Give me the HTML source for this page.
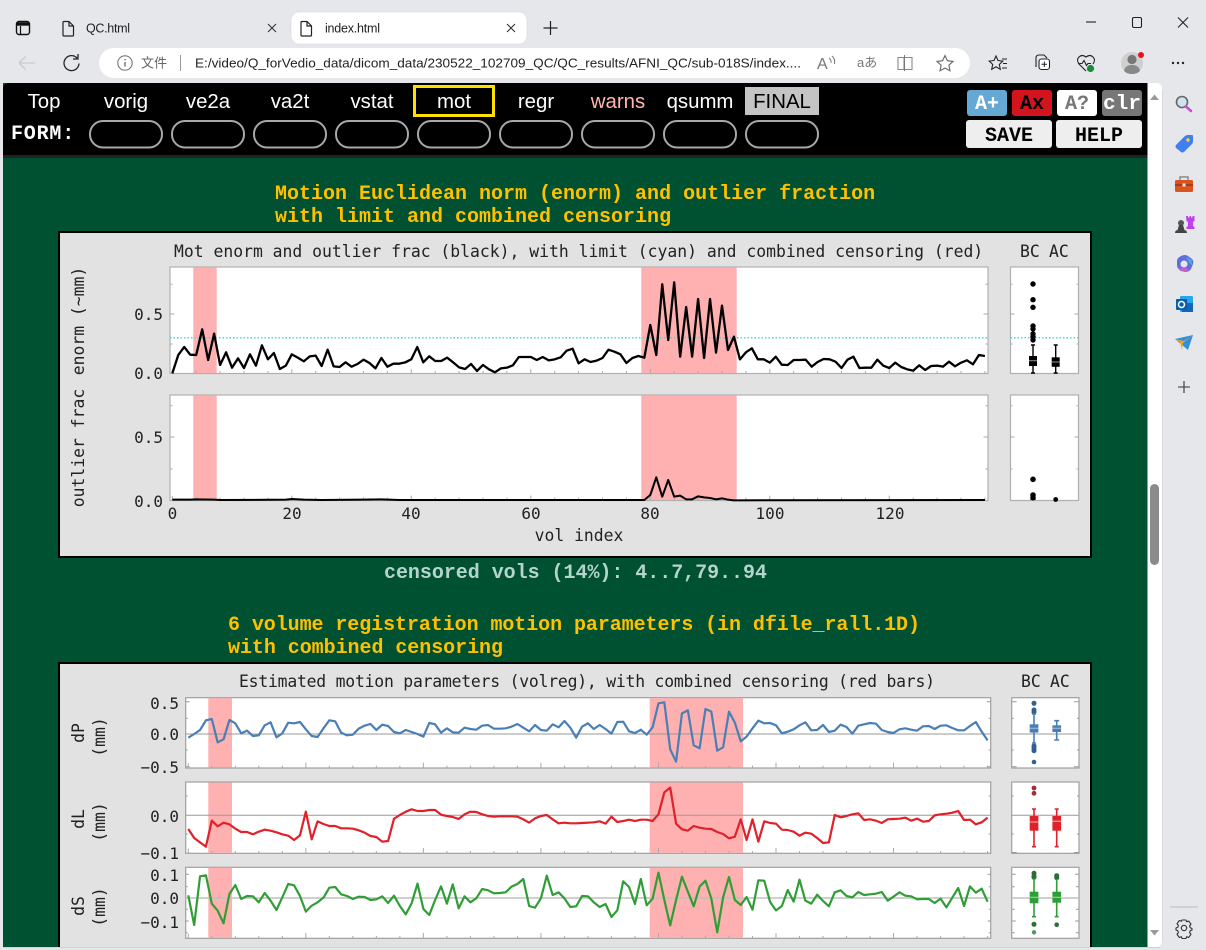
<!DOCTYPE html>
<html lang="en"><head><meta charset="utf-8"><title>index.html</title>
<style>
html,body{margin:0;padding:0;width:1206px;height:950px;overflow:hidden;background:#e6e7eb}
svg{display:block;position:absolute;left:0;top:0}
.ui{font-family:"Liberation Sans","Noto Sans CJK SC",sans-serif}
.nav{font-family:"Liberation Sans",sans-serif;font-size:20.4px;fill:#fff;text-anchor:middle}
.mb{font-family:"Liberation Mono",monospace;font-weight:bold;font-size:20px}
.pl{font-family:"DejaVu Sans Mono",monospace;font-size:16.4px;fill:#222}
.p2{font-size:16px}
.line{fill:none;stroke-linejoin:round;vector-effect:non-scaling-stroke}
.tk{fill:none;stroke:#aaa;stroke-width:1;vector-effect:non-scaling-stroke}
.ax{fill:#fff;stroke:#b0b0b0;stroke-width:1.200}
.ic{fill:none;stroke:#333;stroke-width:1.200}
</style></head><body>
<svg width="1206" height="950" viewBox="0 0 1206 950" xmlns="http://www.w3.org/2000/svg">
<rect width="1206" height="950" fill="#e6e7eb"/>

<!-- tabs -->
<g class="ic" stroke-linejoin="round">
<rect x="16.500" y="21.500" width="13" height="13" rx="2.500" stroke="#111" stroke-width="1.400"/>
<path d="M16.500 24h13" stroke="#111" stroke-width="3.400"/><path d="M20.500 26v8" stroke="#111"/>
<path d="M63 22.500a1 1 0 0 1 1-1h5l4.500 4.500v9a1 1 0 0 1-1 1H64a1 1 0 0 1-1-1zM69 21.500v4.500h4.500" stroke="#222"/>
</g>
<text class="ui" x="86" y="32.500" font-size="12.500" fill="#222" textLength="44">QC.html</text>
<path d="M268 24l8 8M276 24l-8 8" stroke="#333" stroke-width="1.100"/>
<rect x="291" y="12" width="236" height="32" rx="8" fill="#fff" stroke="#d8d8dc" stroke-width=".6"/>
<path d="M301 22.500a1 1 0 0 1 1-1h5l4.500 4.500v9a1 1 0 0 1-1 1H302a1 1 0 0 1-1-1zM307 21.500v4.500h4.500" fill="none" stroke="#222" stroke-width="1.200"/>
<text class="ui" x="325" y="32.500" font-size="12.500" fill="#222" textLength="55">index.html</text>
<path d="M507 24l8 8M515 24l-8 8" stroke="#333" stroke-width="1.100"/>
<path d="M550.500 21v14M543.500 28h14" stroke="#222" stroke-width="1.200"/>
<path d="M1086 22h10" stroke="#222" stroke-width="1.100"/>
<rect x="1132.500" y="17.500" width="9" height="10" rx="1.500" fill="none" stroke="#222" stroke-width="1.100"/>
<path d="M1178 17.500l10 10M1188 17.500l-10 10" stroke="#222" stroke-width="1.100"/>

<!-- toolbar -->
<path d="M19 63h16M19 63l6.500-6.500M19 63l6.500 6.500" fill="none" stroke="#c9cbcf" stroke-width="1.300"/>
<path d="M77 58a7.500 7.500 0 1 0 2 5.500M78 54v5h-5" fill="none" stroke="#222" stroke-width="1.300"/>
<rect x="99" y="48" width="871" height="30" rx="15" fill="#fff"/>
<circle cx="125" cy="63" r="7.200" fill="none" stroke="#777" stroke-width="1.100"/>
<path d="M125 62v4.500M125 59v1.400" stroke="#666" stroke-width="1.300"/>
<text class="ui" x="141" y="67.500" font-size="13" fill="#666">文件</text>
<path d="M180.500 55v16" stroke="#999"/>
<text class="ui" x="195" y="67.500" font-size="13" fill="#222" textLength="606" lengthAdjust="spacingAndGlyphs">E:/video/Q_forVedio_data/dicom_data/230522_102709_QC/QC_results/AFNI_QC/sub-018S/index....</text>
<text class="ui" x="817" y="69" font-size="16" fill="#777">A</text>
<path d="M829 58q2.500 2 2 5M832 56q3.500 3 2.500 8" fill="none" stroke="#777"/>
<text class="ui" x="857" y="67" font-size="13" fill="#777">aあ</text>
<path d="M898 57.500h6v12h-6zM904 57.500h8v12h-8" fill="none" stroke="#888" stroke-width="1.100"/><path d="M904.500 55v16" stroke="#777"/>
<path d="M945 55.500l2.400 5.200 5.600.7-4.100 3.800 1.100 5.600-5-2.800-5 2.800 1.100-5.600-4.100-3.800 5.600-.7z" fill="none" stroke="#666" stroke-width="1.100"/>
<path d="M996 56l2 4.500 4.800.6-3.500 3.300 1 4.900-4.300-2.500-4.300 2.500 1-4.900-3.500-3.300 4.800-.6zM1002 59h5M1003 63.500h4M1002 68h5" fill="none" stroke="#222" stroke-width="1.100"/>
<path d="M1036 67v-9q0-3 3-3h5l3 3" fill="none" stroke="#222" stroke-width="1.100"/>
<rect x="1039" y="59" width="10.500" height="10.500" rx="2.500" fill="#fff" stroke="#222" stroke-width="1.100"/>
<path d="M1044.300 61.500v5.500M1041.500 64.200h5.500" stroke="#222"/>
<path d="M1086 71l-7-7q-3-4 0-7t7 0q4-3 7 0t0 7M1079 63.500h3l2-3 2.500 5 1.500-2h3" fill="none" stroke="#222" stroke-width="1.100"/>
<circle cx="1090.500" cy="68.500" r="3.600" fill="#1a8a3c"/>
<circle cx="1132" cy="63" r="11" fill="#cfcfcf"/>
<circle cx="1132" cy="59.500" r="4.600" fill="#777"/>
<path d="M1124 71q1-6 8-6t8 6q-3 3-8 3t-8-3z" fill="#888"/>
<circle cx="1141" cy="55" r="3" fill="#e81123"/>
<circle cx="1173" cy="63" r="1.200" fill="#222"/><circle cx="1178" cy="63" r="1.200" fill="#222"/><circle cx="1183" cy="63" r="1.200" fill="#222"/>

<!-- sidebar -->
<circle cx="1182" cy="102" r="5.500" fill="#cfe3f0" stroke="#666" stroke-width="1.600"/>
<path d="M1186 106.500l5 4.500" stroke="#c54fd8" stroke-width="2.600" stroke-linecap="round"/>
<path d="M1176 145l9-9q1-1 3-1h4q1 0 1 1v5q0 2-1 3l-8 8q-2 1-3 0l-5-4q-1-1 0-3z" fill="#3f7ff0"/>
<circle cx="1188" cy="140" r="1.700" fill="#ffd23a"/>
<rect x="1175" y="180" width="18" height="12" rx="1.500" fill="#d9541e"/>
<path d="M1180 180v-3h8v3" fill="none" stroke="#888" stroke-width="1.500"/>
<path d="M1175 185h18" stroke="#8f3210" stroke-width="1.200"/><rect x="1182.500" y="183.500" width="3" height="3" fill="#eee"/>
<circle cx="1181" cy="223" r="3" fill="#555"/><path d="M1179 225h4l1.500 5h-7zM1175 233q0-3 3-3h6q3 0 3 3z" fill="#444"/>
<path d="M1186 216h2v1.500h1.500V216h1.500v1.500h1.500V216h2v5l-1.500 1v4l1.500 1v2h-8v-2l1.500-1v-4l-1.500-1z" fill="#c040f0"/>
<path d="M1181 256q4-2 7 0l4 3q2 2 1 5l-2 5q-2 3-6 3l-4-1q-4-2-4-6v-4q0-3 4-5z" fill="#5e70d8"/>
<circle cx="1184" cy="264" r="3.500" fill="#e6e7eb"/><path d="M1186 257l6 3v5l-3-2z" fill="#48a8e0"/><path d="M1178 268q4 5 11 3l-2-3z" fill="#c060d0"/>
<rect x="1180" y="296" width="13" height="16" rx="1" fill="#28a8ea"/><path d="M1182 303h11v9h-11z" fill="#1066b8"/>
<rect x="1176" y="299" width="11" height="11" rx="1" fill="#0a5cb0"/><circle cx="1181.500" cy="304.500" r="3" fill="none" stroke="#fff" stroke-width="1.500"/>
<path d="M1175 339l18-4-5 15z" fill="#2d8fe0"/><path d="M1175 339l9 2 9-6-10 8-1 7-2-8z" fill="#f2a51f"/>
<path d="M1184 381v12M1178 387h12" stroke="#333" stroke-width="1.100"/>
<path d="M1170 907h28" stroke="#b8b8bc"/>
<circle cx="1184" cy="928" r="2.700" fill="none" stroke="#333" stroke-width="1.100"/>
<path d="M1182 920h4l.6 1.800 2-.8 2.400 3.200-1.400 1.500.6 2 1.800.8v1.500l-1.800.8-.6 2 1.400 1.500-2.400 3.200-2-.8-.6 1.800h-4l-.6-1.800-2 .8-2.400-3.200 1.400-1.500-.6-2-1.800-.8V928l1.800-.8.6-2-1.400-1.500 2.400-3.200 2 .8z" fill="none" stroke="#333" stroke-width="1.100" stroke-linejoin="round"/>

<!-- page -->
<path d="M3 89q0-6 6-6h1147q6 0 6 6v852q0 6-6 6H3z" fill="#fff"/>
<rect x="3" y="83" width="1144.500" height="864" fill="#005032"/>
<path d="M3 155V89q0-6 6-6h1138.500v72z" fill="#000"/>
<rect x="3" y="155" width="1144.500" height="3" fill="#222"/>
<path d="M1150 100l4.500-5.500 4.500 5.500z" fill="#999"/>
<path d="M1150 930l4.500 5.500 4.500-5.500z" fill="#999"/>
<rect x="1150" y="484" width="9" height="81" rx="4.500" fill="#8b8b8b"/>

<!-- nav -->
<text class="nav" x="44" y="108">Top</text>
<text class="nav" x="126" y="108">vorig</text>
<text class="nav" x="208" y="108">ve2a</text>
<text class="nav" x="290" y="108">va2t</text>
<text class="nav" x="372" y="108">vstat</text>
<rect x="414.500" y="86.500" width="79" height="29" fill="none" stroke="#ffe000" stroke-width="3"/>
<text class="nav" x="454" y="108">mot</text>
<text class="nav" x="536" y="108">regr</text>
<text class="nav" x="618" y="108" style="fill:#ffb6b0">warns</text>
<text class="nav" x="700" y="108">qsumm</text>
<rect x="745" y="87" width="74" height="28" fill="#c4c4c4"/>
<text class="nav" x="782" y="108" style="fill:#000">FINAL</text>
<text class="mb" x="11" y="139" fill="#fff" letter-spacing=".8">FORM:</text>
<g fill="none" stroke="#a8a8a8" stroke-width="2">
<rect x="90" y="121" width="72" height="26.500" rx="13"/><rect x="172" y="121" width="72" height="26.500" rx="13"/><rect x="254" y="121" width="72" height="26.500" rx="13"/><rect x="336" y="121" width="72" height="26.500" rx="13"/><rect x="418" y="121" width="72" height="26.500" rx="13"/><rect x="500" y="121" width="72" height="26.500" rx="13"/><rect x="582" y="121" width="72" height="26.500" rx="13"/><rect x="664" y="121" width="72" height="26.500" rx="13"/><rect x="746" y="121" width="72" height="26.500" rx="13"/>
</g>
<rect x="967" y="90" width="40" height="26" rx="3" fill="#65a8d3"/>
<rect x="1012" y="90" width="40" height="26" rx="3" fill="#d4141c"/>
<rect x="1057" y="90" width="40" height="26" rx="3" fill="#fff"/>
<rect x="1102" y="90" width="40" height="26" rx="3" fill="#777"/>
<text class="mb" x="987" y="109" text-anchor="middle" fill="#fff">A+</text>
<text class="mb" x="1032" y="109" text-anchor="middle" fill="#000">Ax</text>
<text class="mb" x="1077" y="109" text-anchor="middle" fill="#777">A?</text>
<text class="mb" x="1103" y="109" fill="#fff" textLength="38" lengthAdjust="spacingAndGlyphs">clr</text>
<rect x="966" y="120" width="86" height="28" rx="3" fill="#eee"/>
<rect x="1056" y="120" width="86" height="28" rx="3" fill="#eee"/>
<text class="mb" x="1009" y="141" text-anchor="middle" fill="#000">SAVE</text>
<text class="mb" x="1099" y="141" text-anchor="middle" fill="#000">HELP</text>

<!-- headings -->
<text class="mb" x="275" y="199" fill="#ffc000">Motion Euclidean norm (enorm) and outlier fraction</text>
<text class="mb" x="275" y="222" fill="#ffc000">with limit and combined censoring</text>
<text class="mb" x="384" y="578" fill="#b4d4cc" textLength="383">censored vols (14%): 4..7,79..94</text>
<text class="mb" x="228" y="630" fill="#ffc000" textLength="692">6 volume registration motion parameters (in dfile_rall.1D)</text>
<text class="mb" x="228" y="653" fill="#ffc000" textLength="275">with combined censoring</text>

<!-- figure 1 -->
<rect x="59" y="232" width="1032" height="325" fill="#e2e2e2" stroke="#000" stroke-width="2"/>
<text class="pl" x="174" y="257">Mot enorm and outlier frac (black), with limit (cyan) and combined censoring (red)</text>
<text class="pl" x="1020" y="257">BC</text><text class="pl" x="1049" y="257">AC</text>
<text class="pl" transform="translate(84,321) rotate(-90)" text-anchor="middle">enorm (~mm)</text>
<text class="pl" transform="translate(84,448) rotate(-90)" text-anchor="middle">outlier frac</text>
<g class="pl p2" text-anchor="end">
<text x="163" y="320">0.5</text><text x="163" y="379">0.0</text><text x="163" y="443">0.5</text><text x="163" y="507">0.0</text>
</g>
<g class="pl p2" text-anchor="middle">
<text x="172.500" y="519">0</text><text x="292" y="519">20</text><text x="411" y="519">40</text><text x="531" y="519">60</text><text x="650" y="519">80</text><text x="770" y="519">100</text><text x="890" y="519">120</text>
</g>
<text class="pl" x="579" y="541" text-anchor="middle">vol index</text>
<rect class="ax" x="170" y="267" width="818" height="106.500"/>
<rect class="ax" x="170" y="395" width="818" height="105.500"/>
<rect class="ax" x="1010.500" y="267" width="68" height="106.500"/>
<rect class="ax" x="1010.500" y="395" width="68" height="105.500"/>
<g fill="#ffb0b0">
<rect x="193.300" y="267.600" width="23.400" height="105.400"/><rect x="641.300" y="267.600" width="95.400" height="105.400"/>
<rect x="193.300" y="395.600" width="23.400" height="104.400"/><rect x="641.300" y="395.600" width="95.400" height="104.400"/>
</g>
<path d="M170 337.700H988M1010.500 337.700H1078.500" stroke="#30e4e4" stroke-width="1.500" stroke-dasharray="1.500 2"/>
<path d="M170.500 284.300h2M170.500 314h4M170.500 344h2M985.500 284.300h2.500M983.500 314h4.500M985.500 344h2.500M170.500 405.700h2M170.500 437h4M170.500 469h2M985.500 405.700h2.500M983.500 437h4.500M985.500 469h2.500M1010.500 284.300h2M1010.500 314h4M1010.500 344h2M1076.500 284.300h2M1074.500 314h4M1076.500 344h2M1010.500 405.700h2M1010.500 437h4M1010.500 469h2M1076.500 405.700h2M1074.500 437h4M1076.500 469h2" stroke="#aaa" fill="none"/>
<g transform="matrix(5.975 0 0 .33333 172.300 230)">
<path class="tk" d="M0 430v-12M4 430v-7M8 430v-7M12 430v-7M16 430v-7M20 430v-13M24 430v-7M28 430v-7M32 430v-7M36 430v-7M40 430v-13M44 430v-7M48 430v-7M52 430v-7M56 430v-7M60 430v-13M64 430v-7M68 430v-7M72 430v-7M76 430v-7M80 430v-13M84 430v-7M88 430v-7M92 430v-7M96 430v-7M100 430v-13M104 430v-7M108 430v-7M112 430v-7M116 430v-7M120 430v-13M124 430v-7M128 430v-7M132 430v-7M136 430v-7M0 810v-12M4 810v-7M8 810v-7M12 810v-7M16 810v-7M20 810v-13M24 810v-7M28 810v-7M32 810v-7M36 810v-7M40 810v-13M44 810v-7M48 810v-7M52 810v-7M56 810v-7M60 810v-13M64 810v-7M68 810v-7M72 810v-7M76 810v-7M80 810v-13M84 810v-7M88 810v-7M92 810v-7M96 810v-7M100 810v-13M104 810v-7M108 810v-7M112 810v-7M116 810v-7M120 810v-13M124 810v-7M128 810v-7M132 810v-7M136 810v-7"/>
<polyline class="line" stroke="#000" stroke-width="2.300" points="0,430 1,375 2,351 3,374 4,375 5,298 6,390 7,311 8,405 9,367 10,413 11,385 12,414 13,373 14,407 15,346 16,388 17,369 18,417 19,407 20,373 21,383 22,394 23,379 24,377 25,408 26,359 27,409 28,411 29,397 30,410 31,402 32,389 33,399 34,415 35,384 36,410 37,401 38,401 39,397 40,388 41,351 42,397 43,379 44,393 45,393 46,383 47,397 48,412 49,417 50,402 51,423 52,405 53,418 54,427 55,415 56,413 57,406 58,381 59,381 60,381 61,390 62,381 63,391 64,388 65,382 66,362 67,356 68,400 69,388 70,396 71,392 72,384 73,359 74,365 75,373 76,399 77,384 78,378 79,383 80,285 81,375 82,163 83,330 84,157 85,380 86,231 87,380 88,207 89,384 90,207 91,368 92,227 93,360 94,320 95,388 96,367 97,355 98,388 99,388 100,398 101,380 102,404 103,405 104,390 105,390 106,389 107,410 108,396 109,387 110,388 111,395 112,414 113,389 114,380 115,414 116,413 117,413 118,389 119,407 120,414 121,398 122,411 123,418 124,422 125,406 126,420 127,408 128,407 129,410 130,395 131,409 132,398 133,391 134,403 135,375 136,378"/>
<polyline class="line" stroke="#000" stroke-width="2" points="0,809 3,809 4,808 7,809 8,810 19,809 20,807 22,809 25,810 32,809 35,808 38,810 79,810 80,795 81,742 82,800 83,750 84,800 85,797 86,808 87,808 88,799 89,802 90,804 91,808 92,805 93,809 94,811 136,810"/>
</g>
<!-- fig 1 boxplots -->
<g fill="#000">
<circle cx="1033" cy="284" r="2.700"/><circle cx="1033" cy="299.700" r="2.700"/><circle cx="1033" cy="307.300" r="2.700"/><circle cx="1033" cy="326" r="2.700"/><circle cx="1033" cy="329" r="2.700"/><circle cx="1033" cy="334" r="2.700"/><circle cx="1033" cy="336.700" r="2.700"/><circle cx="1033" cy="340" r="2.700"/>
<rect x="1029" y="356" width="8" height="10"/><rect x="1051.700" y="357.300" width="8" height="9.500"/>
<circle cx="1033" cy="479.300" r="2.800"/><circle cx="1033" cy="495" r="2.800"/><circle cx="1033" cy="497.700" r="2.800"/><circle cx="1055.700" cy="499.500" r="2.400"/>
<rect x="1030.500" y="497" width="5" height="3"/>
</g>
<path d="M1033 345v28M1031 345h4M1031 373h4M1055.700 345v28M1053.700 345h4M1053.700 373h4" stroke="#000" stroke-width="1.400" fill="none"/>
<path d="M1029 360.700h8M1051.700 362h8" stroke="#999" stroke-width="1"/>

<!-- figure 2 -->
<path d="M59 947V663H1091V947" fill="#e2e2e2" stroke="#000" stroke-width="2"/>
<text class="pl" x="239" y="687" textLength="696">Estimated motion parameters (volreg), with combined censoring (red bars)</text>
<text class="pl" x="1021" y="687">BC</text><text class="pl" x="1050" y="687">AC</text>
<g class="pl" text-anchor="middle">
<text transform="translate(84,733) rotate(-90)">dP</text><text transform="translate(105,737) rotate(-90)">(mm)</text>
<text transform="translate(84,819) rotate(-90)">dL</text><text transform="translate(105,822) rotate(-90)">(mm)</text>
<text transform="translate(84,906) rotate(-90)">dS</text><text transform="translate(105,907) rotate(-90)">(mm)</text>
</g>
<g class="pl p2" text-anchor="end">
<text x="179" y="709">0.5</text><text x="179" y="740">0.0</text><text x="179" y="773">−0.5</text>
<text x="179" y="822">0.0</text><text x="179" y="859">−0.1</text>
<text x="179" y="881">0.1</text><text x="179" y="904">0.0</text><text x="179" y="928">−0.1</text>
</g>
<g class="ax" style="stroke:#a0a0a0">
<rect x="185.700" y="697.700" width="805" height="70.300"/><rect x="185.700" y="782" width="805" height="71.300"/><rect x="185.700" y="867.300" width="805" height="71"/>
<rect x="1011.700" y="697.700" width="67.300" height="70.300"/><rect x="1011.700" y="782" width="67.300" height="71.300"/><rect x="1011.700" y="867.300" width="67.300" height="71"/>
</g>
<g fill="#ffb0b0">
<rect x="208.300" y="698.200" width="23.700" height="69.300"/><rect x="649.700" y="698.200" width="93.300" height="69.300"/>
<rect x="208.300" y="782.500" width="23.700" height="70.300"/><rect x="649.700" y="782.500" width="93.300" height="70.300"/>
<rect x="208.300" y="867.800" width="23.700" height="70"/><rect x="649.700" y="867.800" width="93.300" height="70"/>
</g>
<path d="M185.700 734H990.700M1011.700 734H1079M185.700 815.300H990.700M1011.700 815.300H1079" stroke="#999" stroke-width="1"/>
<path d="M185.700 898H990.700M1011.700 898H1079" stroke="#c0c0c0" stroke-width="1.500"/>
<path d="M185.700 701.700h4M185.700 718.300h2M185.700 750h2M185.700 766.700h4M986.700 701.700h4M988.700 718.300h2M988.700 750h2M986.700 766.700h4M1011.700 701.700h5M1011.700 718.300h2M1011.700 750h2M1011.700 766.700h5M1074 701.700h5M1077 718.300h2M1077 750h2M1074 766.700h5M185.700 796h2M185.700 834h2M988.700 796h2M988.700 834h2M1011.700 796h2M1011.700 834h2M1077 796h2M1077 834h2M1011.700 852.500h5M1074 852.500h5M185.700 874.300h3M185.700 886.700h2M185.700 909.300h2M185.700 921h3M185.700 932.700h2M987.700 874.300h3M988.700 886.700h2M988.700 909.300h2M987.700 921h3M988.700 932.700h2M1011.700 874.300h4M1011.700 886.700h3M1011.700 909.300h3M1011.700 921h4M1011.700 932.700h3M1075 874.300h4M1076 886.700h3M1076 909.300h3M1075 921h4M1076 932.700h3" stroke="#999" fill="none"/>
<g transform="matrix(5.877 0 0 .33333 188.300 660)">
<path class="tk" d="M0 324v-14M4 324v-7M8 324v-7M12 324v-7M16 324v-7M20 324v-16M24 324v-7M28 324v-7M32 324v-7M36 324v-7M40 324v-16M44 324v-7M48 324v-7M52 324v-7M56 324v-7M60 324v-16M64 324v-7M68 324v-7M72 324v-7M76 324v-7M80 324v-16M84 324v-7M88 324v-7M92 324v-7M96 324v-7M100 324v-16M104 324v-7M108 324v-7M112 324v-7M116 324v-7M120 324v-16M124 324v-7M128 324v-7M132 324v-7M136 324v-7M0 580v-14M4 580v-7M8 580v-7M12 580v-7M16 580v-7M20 580v-16M24 580v-7M28 580v-7M32 580v-7M36 580v-7M40 580v-16M44 580v-7M48 580v-7M52 580v-7M56 580v-7M60 580v-16M64 580v-7M68 580v-7M72 580v-7M76 580v-7M80 580v-16M84 580v-7M88 580v-7M92 580v-7M96 580v-7M100 580v-16M104 580v-7M108 580v-7M112 580v-7M116 580v-7M120 580v-16M124 580v-7M128 580v-7M132 580v-7M136 580v-7M0 835v-14M4 835v-7M8 835v-7M12 835v-7M16 835v-7M20 835v-16M24 835v-7M28 835v-7M32 835v-7M36 835v-7M40 835v-16M44 835v-7M48 835v-7M52 835v-7M56 835v-7M60 835v-16M64 835v-7M68 835v-7M72 835v-7M76 835v-7M80 835v-16M84 835v-7M88 835v-7M92 835v-7M96 835v-7M100 835v-16M104 835v-7M108 835v-7M112 835v-7M116 835v-7M120 835v-16M124 835v-7M128 835v-7M132 835v-7M136 835v-7"/>
<polyline class="line" stroke="#4a7fb5" stroke-width="2.200" points="0,233 1,222 2,210 3,181 4,177 5,247 6,238 7,180 8,190 9,220 10,212 11,228 12,226 13,196 14,187 15,232 16,220 17,188 18,190 19,186 20,208 21,228 22,231 23,205 24,181 25,184 26,218 27,226 28,224 29,206 30,197 31,192 32,210 33,194 34,198 35,216 36,220 37,210 38,216 39,222 40,230 41,189 42,193 43,218 44,205 45,217 46,218 47,203 48,207 49,209 50,197 51,195 52,206 53,206 54,205 55,200 56,192 57,203 58,214 59,195 60,210 61,212 62,193 63,202 64,183 65,203 66,233 67,200 68,190 69,207 70,195 71,207 72,221 73,186 74,185 75,214 76,219 77,209 78,224 79,202 80,130 81,127 82,268 83,305 84,160 85,151 86,256 87,265 88,147 89,155 90,272 91,262 92,155 93,188 94,244 95,230 96,205 97,182 98,190 99,189 100,196 101,220 102,215 103,208 104,196 105,187 106,211 107,210 108,195 109,216 110,212 111,194 112,201 113,221 114,197 115,193 116,189 117,191 118,210 119,216 120,219 121,208 122,205 123,209 124,212 125,199 126,198 127,207 128,197 129,196 130,204 131,211 132,211 133,198 134,186 135,215 136,241"/>
<polyline class="line" stroke="#e0202a" stroke-width="2.200" points="0,507 1,534 2,547 3,560 4,482 5,499 6,488 7,493 8,506 9,516 10,516 11,523 12,515 13,509 14,512 15,517 16,523 17,527 18,540 19,526 20,455 21,538 22,484 23,492 24,498 25,498 26,505 27,505 28,506 29,511 30,518 31,528 32,531 33,545 34,543 35,476 36,465 37,455 38,448 39,453 40,453 41,450 42,450 43,464 44,468 45,471 46,477 47,463 48,455 49,456 50,463 51,468 52,470 53,469 54,469 55,469 56,470 57,478 58,488 59,475 60,468 61,465 62,478 63,490 64,488 65,490 66,490 67,489 68,488 69,487 70,484 71,491 72,470 73,486 74,483 75,479 76,483 77,479 78,479 79,483 80,463 81,397 82,383 83,491 84,508 85,512 86,498 87,503 88,506 89,507 90,516 91,522 92,535 93,530 94,478 95,540 96,478 97,545 98,484 99,489 100,491 101,509 102,510 103,515 104,527 105,518 106,521 107,534 108,549 109,547 110,465 111,472 112,468 113,463 114,460 115,480 116,478 117,482 118,489 119,478 120,477 121,476 122,473 123,482 124,476 125,485 126,483 127,466 128,463 129,461 130,458 131,453 132,480 133,479 134,493 135,487 136,473"/>
<polyline class="line" stroke="#2f9e36" stroke-width="2.200" points="0,706 1,795 2,649 3,646 4,731 5,752 6,790 7,702 8,675 9,717 10,708 11,709 12,727 13,699 14,722 15,750 16,712 17,672 18,676 19,708 20,755 21,737 22,727 23,713 24,683 25,681 26,703 27,708 28,717 29,710 30,711 31,720 32,718 33,709 34,729 35,707 36,738 37,763 38,730 39,671 40,747 41,765 42,720 43,679 44,731 45,673 46,745 47,709 48,727 49,715 50,687 51,691 52,700 53,699 54,697 55,680 56,672 57,657 58,738 59,743 60,715 61,647 62,705 63,697 64,715 65,741 66,739 67,708 68,709 69,727 70,741 71,732 72,771 73,751 74,664 75,681 76,732 77,657 78,736 79,716 80,638 81,720 82,796 83,720 84,650 85,695 86,739 87,680 88,662 89,716 90,817 91,712 92,651 93,720 94,735 95,711 96,749 97,661 98,662 99,726 100,751 101,738 102,690 103,725 104,659 105,722 106,731 107,704 108,723 109,739 110,697 111,691 112,708 113,712 114,696 115,705 116,703 117,701 118,696 119,722 120,710 121,697 122,707 123,709 124,718 125,717 126,717 127,729 128,716 129,742 130,713 131,684 132,738 133,679 134,698 135,686 136,725"/>
</g>
<!-- fig 2 boxplots -->
<g fill="#30608f">
<circle cx="1034" cy="703.300" r="2.500"/><circle cx="1034" cy="710" r="2.500"/><circle cx="1034" cy="712.300" r="2.500"/><circle cx="1034" cy="746" r="2.500"/><circle cx="1034" cy="748.300" r="2.500"/><circle cx="1034" cy="750.700" r="2.500"/><circle cx="1034" cy="762" r="2.300"/>
</g>
<path d="M1034 714v29M1032 714h4M1032 743h4M1056.700 720.700v19.300M1054.200 720.700h5M1054.200 740h5" stroke="#4a7fb5" stroke-width="1.600" fill="none"/>
<rect x="1029.700" y="724.300" width="8.700" height="8.300" fill="#4a7fb5"/><rect x="1052.400" y="725.300" width="8.700" height="6.700" fill="#4a7fb5"/>
<path d="M1029.700 728.300h8.700M1052.400 728.300h8.700" stroke="#9fb6cf" stroke-width="1.200"/>
<circle cx="1034" cy="788" r="2.400" fill="#a82a3a"/><circle cx="1034" cy="793.300" r="2.400" fill="#a82a3a"/>
<path d="M1034 809v38M1032 809h4M1032 846.700h4M1056.700 809v37.700M1054.700 809h4M1054.700 846.700h4" stroke="#e0202a" stroke-width="1.600" fill="none"/>
<rect x="1029.700" y="816" width="8.700" height="14.700" fill="#e0202a"/><rect x="1052.400" y="816" width="8.700" height="14.700" fill="#e0202a"/>
<path d="M1029.700 822h8.700M1052.400 821.300h8.700" stroke="#d8a0a0" stroke-width="1.300"/>
<g fill="#2d6e38">
<circle cx="1034" cy="873.300" r="2.500"/><circle cx="1034" cy="876" r="2.500"/><circle cx="1034" cy="877.300" r="2.500"/><circle cx="1034" cy="924.300" r="2.500"/>
<circle cx="1056.700" cy="875.700" r="2.500"/><circle cx="1056.700" cy="877.700" r="2.500"/><circle cx="1056.700" cy="924.700" r="2.300"/>
<circle cx="1034" cy="932.300" r="2.200" fill="#4c9a58"/>
</g>
<path d="M1034 878.300v38.400M1032 916.700h4M1056.700 879v37.700M1054.700 916.700h4" stroke="#2f9e36" stroke-width="1.600" fill="none"/>
<rect x="1029.700" y="891.700" width="8.700" height="11.600" fill="#2f9e36"/><rect x="1052.400" y="891.700" width="8.700" height="11" fill="#2f9e36"/>
<path d="M1029.700 897.300h8.700M1052.400 897.300h8.700" stroke="#9dc9a2" stroke-width="1.200"/>

<!-- window bottom -->
<rect x="0" y="947" width="1163" height="3" fill="#e6e7eb"/>
<path d="M3 947.500H1160" stroke="#d2d3d7" stroke-width="1"/>
<path d="M1162.500 90v852" stroke="#d8d9dd" stroke-width="1"/>
</svg>
</body></html>
